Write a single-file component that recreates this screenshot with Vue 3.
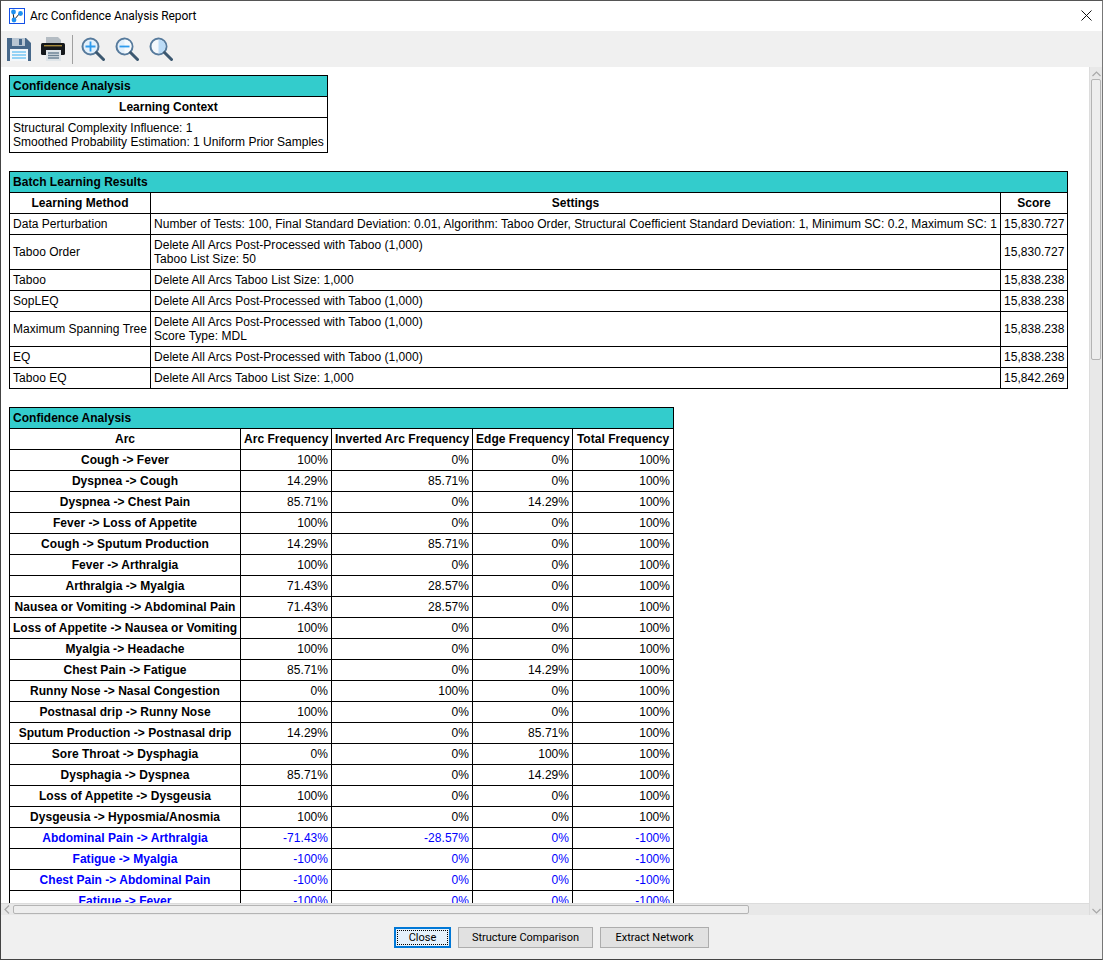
<script setup>
const batchRows = [
  { method: "Data Perturbation", settings: ["Number of Tests: 100, Final Standard Deviation: 0.01, Algorithm: Taboo Order, Structural Coefficient Standard Deviation: 1, Minimum SC: 0.2, Maximum SC: 1"], score: "15,830.727" },
  { method: "Taboo Order", settings: ["Delete All Arcs Post-Processed with Taboo (1,000)", "Taboo List Size: 50"], score: "15,830.727" },
  { method: "Taboo", settings: ["Delete All Arcs Taboo List Size: 1,000"], score: "15,838.238" },
  { method: "SopLEQ", settings: ["Delete All Arcs Post-Processed with Taboo (1,000)"], score: "15,838.238" },
  { method: "Maximum Spanning Tree", settings: ["Delete All Arcs Post-Processed with Taboo (1,000)", "Score Type: MDL"], score: "15,838.238" },
  { method: "EQ", settings: ["Delete All Arcs Post-Processed with Taboo (1,000)"], score: "15,838.238" },
  { method: "Taboo EQ", settings: ["Delete All Arcs Taboo List Size: 1,000"], score: "15,842.269" },
];

const arcRows = [
  ["Cough -> Fever", "100%", "0%", "0%", "100%"],
  ["Dyspnea -> Cough", "14.29%", "85.71%", "0%", "100%"],
  ["Dyspnea -> Chest Pain", "85.71%", "0%", "14.29%", "100%"],
  ["Fever -> Loss of Appetite", "100%", "0%", "0%", "100%"],
  ["Cough -> Sputum Production", "14.29%", "85.71%", "0%", "100%"],
  ["Fever -> Arthralgia", "100%", "0%", "0%", "100%"],
  ["Arthralgia -> Myalgia", "71.43%", "28.57%", "0%", "100%"],
  ["Nausea or Vomiting -> Abdominal Pain", "71.43%", "28.57%", "0%", "100%"],
  ["Loss of Appetite -> Nausea or Vomiting", "100%", "0%", "0%", "100%"],
  ["Myalgia -> Headache", "100%", "0%", "0%", "100%"],
  ["Chest Pain -> Fatigue", "85.71%", "0%", "14.29%", "100%"],
  ["Runny Nose -> Nasal Congestion", "0%", "100%", "0%", "100%"],
  ["Postnasal drip -> Runny Nose", "100%", "0%", "0%", "100%"],
  ["Sputum Production -> Postnasal drip", "14.29%", "0%", "85.71%", "100%"],
  ["Sore Throat -> Dysphagia", "0%", "0%", "100%", "100%"],
  ["Dysphagia -> Dyspnea", "85.71%", "0%", "14.29%", "100%"],
  ["Loss of Appetite -> Dysgeusia", "100%", "0%", "0%", "100%"],
  ["Dysgeusia -> Hyposmia/Anosmia", "100%", "0%", "0%", "100%"],
  ["Abdominal Pain -> Arthralgia", "-71.43%", "-28.57%", "0%", "-100%", true],
  ["Fatigue -> Myalgia", "-100%", "0%", "0%", "-100%", true],
  ["Chest Pain -> Abdominal Pain", "-100%", "0%", "0%", "-100%", true],
  ["Fatigue -> Fever", "-100%", "0%", "0%", "-100%", true],
];
</script>

<template>
  <div class="window">
    <div class="titlebar">
      <svg class="app-icon" width="16" height="16" viewBox="0 0 16 16">
        <rect x="0.5" y="0.5" width="15" height="15" fill="#fff" stroke="#1450e6" />
        <path d="M4 4 L5 12 M5 12 L11 5" stroke="#222" stroke-width="1" fill="none" />
        <circle cx="4.5" cy="4" r="2.4" fill="#1e90f0" />
        <circle cx="11.5" cy="5.5" r="2.4" fill="#1e90f0" />
        <circle cx="5" cy="12" r="2.4" fill="#1e90f0" />
      </svg>
      <span class="title">Arc Confidence Analysis Report</span>
      <svg class="close-x" width="11" height="11" viewBox="0 0 11 11">
        <path d="M0.5 0.5 L10.5 10.5 M10.5 0.5 L0.5 10.5" stroke="#111" stroke-width="1" />
      </svg>
    </div>

    <div class="toolbar">
      <svg class="tool" width="24" height="24" viewBox="0 0 24 24">
        <path d="M0 1 H19 L24 6 V24 H0 Z" fill="#47688a" />
        <rect x="5" y="1" width="13" height="8" fill="#b9c6d3" />
        <rect x="12" y="2" width="3" height="6" fill="#47688a" />
        <rect x="3" y="12" width="18" height="12" fill="#f4f7fa" />
        <path d="M5 15 H19 M5 18 H19 M5 21 H19" stroke="#35aef0" stroke-width="1.2" />
      </svg>
      <svg class="tool printer" width="24" height="24" viewBox="0 0 24 24">
        <path d="M5 0 H17 L20 3 V8 H5 Z" fill="#b4bcc3" />
        <rect x="0" y="6" width="24" height="12" rx="1.5" fill="#15181b" />
        <rect x="3" y="8" width="18" height="1.4" fill="#a58a3c" />
        <rect x="5" y="13" width="15" height="11" fill="#dfe5e9" />
        <path d="M7 16 H18 M7 18.5 H18 M7 21 H18" stroke="#6d8496" stroke-width="1.3" />
      </svg>
      <span class="tool-sep"></span>
      <svg class="tool zoom" width="24" height="24" viewBox="0 0 24 24">
        <circle cx="9.5" cy="9.5" r="8" fill="#e3f0fb" stroke="#567a9c" stroke-width="2" />
        <path d="M15.5 15.5 L22.5 22.5" stroke="#3c5870" stroke-width="3" stroke-linecap="round" />
        <path d="M4.5 9.5 H14.5 M9.5 4.5 V14.5" stroke="#2e9bee" stroke-width="1.8" />
      </svg>
      <svg class="tool zoom" width="24" height="24" viewBox="0 0 24 24">
        <circle cx="9.5" cy="9.5" r="8" fill="#e3f0fb" stroke="#567a9c" stroke-width="2" />
        <path d="M9.5 2.5 A7 7 0 0 1 9.5 16.5 Z" fill="#f6fafd" />
        <path d="M15.5 15.5 L22.5 22.5" stroke="#3c5870" stroke-width="3" stroke-linecap="round" />
        <path d="M4.5 9.5 H14.5" stroke="#2e9bee" stroke-width="1.8" />
      </svg>
      <svg class="tool zoom" width="24" height="24" viewBox="0 0 24 24">
        <circle cx="9.5" cy="9.5" r="8" fill="#f4f8fc" stroke="#567a9c" stroke-width="2" />
        <path d="M9.5 2.5 A7 7 0 0 1 9.5 16.5 Z" fill="#bcdcf7" />
        <path d="M15.5 15.5 L22.5 22.5" stroke="#3c5870" stroke-width="3" stroke-linecap="round" />
      </svg>
    </div>

    <div class="middle">
      <div class="left-col">
        <div class="viewport">
          <table class="report">
            <tbody>
              <tr><td class="banner" colspan="1">Confidence Analysis</td></tr>
              <tr><th>Learning Context</th></tr>
              <tr>
                <td>
                  Structural Complexity Influence: 1<br />
                  Smoothed Probability Estimation: 1 Uniform Prior Samples
                </td>
              </tr>
            </tbody>
          </table>

          <table class="report batch">
            <colgroup>
              <col class="c-method" />
              <col class="c-settings" />
              <col class="c-score" />
            </colgroup>
            <tbody>
              <tr><td class="banner" colspan="3">Batch Learning Results</td></tr>
              <tr>
                <th>Learning Method</th>
                <th>Settings</th>
                <th>Score</th>
              </tr>
              <tr v-for="row in batchRows" :key="row.method">
                <td>{{ row.method }}</td>
                <td>
                  <div v-for="line in row.settings" :key="line">{{ line }}</div>
                </td>
                <td class="num">{{ row.score }}</td>
              </tr>
            </tbody>
          </table>

          <table class="report arcs">
            <colgroup>
              <col class="c-arc" />
              <col class="c-freq" />
              <col class="c-inv" />
              <col class="c-edge" />
              <col class="c-total" />
            </colgroup>
            <tbody>
              <tr><td class="banner" colspan="5">Confidence Analysis</td></tr>
              <tr>
                <th>Arc</th>
                <th>Arc Frequency</th>
                <th>Inverted Arc Frequency</th>
                <th>Edge Frequency</th>
                <th>Total Frequency</th>
              </tr>
              <tr v-for="row in arcRows" :key="row[0]" :class="{ reversed: row[5] }">
                <th>{{ row[0] }}</th>
                <td class="num">{{ row[1] }}</td>
                <td class="num">{{ row[2] }}</td>
                <td class="num">{{ row[3] }}</td>
                <td class="num">{{ row[4] }}</td>
              </tr>
            </tbody>
          </table>
        </div>

        <div class="hbar">
          <svg class="hbar-arrow" width="6" height="9" viewBox="0 0 6 9">
            <path d="M5 0.5 L1 4.5 L5 8.5" fill="none" stroke="#a8a8a8" stroke-width="1.2" />
          </svg>
          <div class="hbar-thumb"></div>
        </div>
      </div>

      <div class="vbar">
        <svg class="vbar-arrow" width="9" height="6" viewBox="0 0 9 6">
          <path d="M0.5 5 L4.5 1 L8.5 5" fill="none" stroke="#a8a8a8" stroke-width="1.2" />
        </svg>
        <div class="vbar-thumb"></div>
        <svg class="vbar-arrow down" width="9" height="6" viewBox="0 0 9 6">
          <path d="M0.5 1 L4.5 5 L8.5 1" fill="none" stroke="#a8a8a8" stroke-width="1.2" />
        </svg>
      </div>
    </div>

    <div class="footer">
      <button class="btn focused"><span>Close</span></button>
      <button class="btn wide">Structure Comparison</button>
      <button class="btn mid">Extract Network</button>
    </div>
  </div>
</template>

<style scoped>
.window {
  box-sizing: border-box;
  display: flex;
  flex-direction: column;
  width: 1103px;
  height: 960px;
  overflow: hidden;
  background: #f0f0f0;
  border-top: 1px solid #555;
  border-right: 1px solid #777;
  border-bottom: 1px solid #444;
  border-left: 1px solid #444;
}

.titlebar {
  box-sizing: border-box;
  display: flex;
  align-items: center;
  height: 30px;
  padding: 0 10px 1px 8px;
  background: #fff;
}

.title {
  margin-left: 5px;
  font: 12px Roboto, "Noto Sans", sans-serif;
  letter-spacing: -0.06px;
  color: #000;
}

.close-x {
  margin-left: auto;
}

.toolbar {
  display: flex;
  align-items: center;
  height: 36px;
  padding-left: 6px;
  background: #f0f0f0;
}

.tool {
  flex: none;
}

.printer {
  margin-left: 10px;
}

.tool-sep {
  width: 1px;
  height: 29px;
  margin: 0 8px 0 7px;
  background: #a0a0a0;
}

.zoom + .zoom {
  margin-left: 10px;
}

.middle {
  display: flex;
  height: 848px;
}

.left-col {
  display: flex;
  flex: 1;
  flex-direction: column;
  min-width: 0;
}

.viewport {
  display: flex;
  flex: 1;
  flex-direction: column;
  align-items: flex-start;
  gap: 18px;
  padding: 8px 0 0 8px;
  overflow: hidden;
  background: #fff;
}

.report {
  flex: none;
  border-collapse: collapse;
  font: 12px/14px "Liberation Sans", Arial, sans-serif;
  color: #000;
  white-space: nowrap;
}

/* column widths follow the report, text runs a bit wider than Liberation here */
.batch,
.arcs {
  table-layout: fixed;
  letter-spacing: 0.03px;
}

.batch {
  width: 1058px;
}

.arcs {
  width: 664px;
}

.c-method {
  width: 141px;
}

.c-settings {
  width: 850px;
}

.c-score {
  width: 67px;
}

.c-arc {
  width: 231px;
}

.c-freq {
  width: 91px;
}

.c-inv {
  width: 141px;
}

.c-edge {
  width: 100px;
}

.c-total {
  width: 101px;
}

.report th,
.report td {
  padding: 3px;
  border: 1px solid #000;
}

.report th {
  font-weight: bold;
  text-align: center;
}

.report td {
  text-align: left;
}

.report td.banner {
  font-weight: bold;
  background: #33cccc;
}

.report td.num {
  text-align: right;
}

.reversed th,
.reversed td {
  color: #0000ff;
}

.hbar {
  display: flex;
  flex: none;
  align-items: center;
  height: 12px;
  padding-left: 3px;
  background: #e8e8e8;
  border-top: 1px solid #dcdcdc;
  box-sizing: border-box;
}

.hbar-arrow {
  flex: none;
}

.hbar-thumb {
  box-sizing: border-box;
  width: 736px;
  height: 9px;
  margin-left: 3px;
  background: #eeeeee;
  border: 1px solid #b4b4b4;
  border-radius: 2px;
}

.vbar {
  position: relative;
  box-sizing: border-box;
  display: flex;
  flex: none;
  flex-direction: column;
  align-items: center;
  width: 13px;
  padding-top: 4px;
  background: #e8e8e8;
  border-left: 1px solid #dcdcdc;
}

.vbar-thumb {
  box-sizing: border-box;
  width: 10px;
  height: 281px;
  margin-top: 2px;
  background: #eeeeee;
  border: 1px solid #b4b4b4;
  border-radius: 2px;
}

.vbar-arrow.down {
  margin-top: auto;
  margin-bottom: 1px;
}

.footer {
  display: flex;
  flex: none;
  align-items: flex-start;
  justify-content: center;
  gap: 7px;
  height: 44px;
  padding-top: 12px;
  box-sizing: border-box;
  background: #f0f0f0;
}

.btn {
  box-sizing: border-box;
  height: 21px;
  padding: 0 0 1px;
  font: 11px Roboto, "Noto Sans", sans-serif;
  color: #000;
  background: #e1e1e1;
  border: 1px solid #adadad;
}

.btn.focused {
  width: 57px;
  padding: 1px;
  background: #e5f1fb;
  border: 2px solid #0078d7;
}

.btn.focused span {
  display: block;
  height: 15px;
  line-height: 14px;
  box-sizing: border-box;
  border: 1px dotted #000;
}

.btn.wide {
  width: 135px;
}

.btn.mid {
  width: 109px;
}
</style>
